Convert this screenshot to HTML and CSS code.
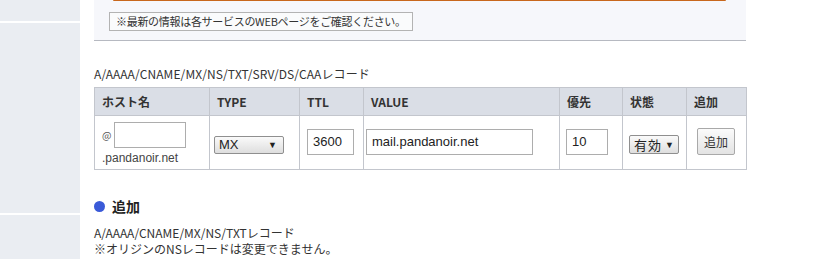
FILE: index.html
```html
<!DOCTYPE html>
<html lang="ja">
<head>
    <meta charset="UTF-8">
    <meta name="viewport" content="width=device-width, initial-scale=1.0">
    <title>DNS設定</title>
    <link rel="stylesheet" href="styles.css">
</head>
<body>
    <div class="page">
        <div class="sidebar">
            <div class="side-item short"></div>
            <div class="side-item tall"></div>
            <div class="side-item"></div>
        </div>

        <div class="main">
            <div class="info-panel">
                <div class="orange-bar"></div>
                <div class="notice">※最新の情報は各サービスのWEBページをご確認ください。</div>
            </div>

            <p class="caption">A/AAAA/CNAME/MX/NS/TXT/SRV/DS/CAAレコード</p>

            <table class="records">
                <colgroup>
                    <col style="width: 115px">
                    <col style="width: 90px">
                    <col style="width: 64px">
                    <col style="width: 196px">
                    <col style="width: 63px">
                    <col style="width: 64px">
                    <col style="width: 60px">
                </colgroup>
                <thead>
                    <tr>
                        <th>ホスト名</th>
                        <th>TYPE</th>
                        <th>TTL</th>
                        <th>VALUE</th>
                        <th>優先</th>
                        <th>状態</th>
                        <th>追加</th>
                    </tr>
                </thead>
                <tbody>
                    <tr>
                        <td class="host-cell">
                            <div class="host-line">
                                <span class="at">@</span>
                                <input type="text" class="field host-input" value="">
                            </div>
                            <div class="domain">.pandanoir.net</div>
                        </td>
                        <td class="type-cell">
                            <div class="select type-select">
                                <span class="select-text">MX</span>
                                <span class="arrow">▼</span>
                            </div>
                        </td>
                        <td>
                            <input type="text" class="field ttl-input" value="3600">
                        </td>
                        <td class="value-cell">
                            <input type="text" class="field value-input" value="mail.pandanoir.net">
                        </td>
                        <td class="prio-cell">
                            <input type="text" class="field prio-input" value="10">
                        </td>
                        <td class="state-cell">
                            <div class="select state-select">
                                <span class="select-text jp">有効</span>
                                <span class="arrow">▼</span>
                            </div>
                        </td>
                        <td class="add-cell">
                            <button class="add-btn">追加</button>
                        </td>
                    </tr>
                </tbody>
            </table>

            <h2 class="section-title"><span class="dot"></span>追加</h2>
            <p class="text">A/AAAA/CNAME/MX/NS/TXTレコード</p>
            <p class="text">※オリジンのNSレコードは変更できません。</p>
            <p class="text">※オリジンのNSレコード機能で設定されるA/AAAAレコードは変更できません。</p>
        </div>
    </div>
</body>
</html>
```

FILE: styles.css
```css
body {
    margin: 0;
    font-family: 'Noto Sans CJK JP', 'Noto Sans', sans-serif;
    color: #333;
    background-color: #fff;
    height: 259px;
    overflow: hidden;
}

.page {
    display: flex;
    align-items: flex-start;
}

/* left navigation */
.sidebar {
    width: 80px;
    flex-shrink: 0;
    display: flex;
    flex-direction: column;
    gap: 2px;
}

.side-item {
    background-color: #eaedf2;
    height: 60px;
}

.side-item.short {
    height: 21px;
}

.side-item.tall {
    height: 190px;
}

.main {
    width: 652px;
    margin-left: 14px;
}

/* top info panel */
.info-panel {
    background-color: #f6f7fb;
    border-bottom: 1px solid #b6b9c1;
    padding: 0 20px 9px 15px;
}

.orange-bar {
    height: 1px;
    margin-left: 4px;
    background-color: #c8671c;
    border-radius: 0 0 2px 2px;
}

.notice {
    display: inline-block;
    margin-top: 11px;
    border: 1px solid #b3b3b3;
    background-color: #fafbfc;
    padding: 0 6px;
    height: 17px;
    line-height: 17px;
    font-size: 11px;
    letter-spacing: -0.3px;
    color: #333;
}

.caption {
    margin: 24px 0 5px;
    font-size: 12px;
    line-height: 17px;
    letter-spacing: 0.1px;
    color: #333;
}

/* record table */
.records {
    width: 652px;
    table-layout: fixed;
    border-collapse: collapse;
}

.records th,
.records td {
    border: 1px solid #c3c6cd;
    text-align: left;
    padding: 0 7px;
}

.records th {
    background-color: #dadee6;
    height: 27px;
    font-size: 12px;
    font-weight: 700;
    color: #333;
}

.records td {
    height: 53px;
    vertical-align: middle;
    font-size: 12px;
}

.field {
    box-sizing: border-box;
    height: 26px;
    border: 1px solid #adadad;
    background-color: #fff;
    font-family: 'Liberation Sans', Arial, sans-serif;
    font-size: 13px;
    color: #222;
    padding: 0 5px;
    margin: 0;
    display: block;
}

.records td.host-cell {
    vertical-align: top;
}

.host-line {
    display: flex;
    align-items: center;
    gap: 3px;
    margin-top: 6px;
}

.at {
    font-size: 10px;
    color: #555;
    margin-top: -2px;
}

.host-input {
    width: 72px;
}

.domain {
    font-family: 'Liberation Sans', Arial, sans-serif;
    font-size: 12px;
    line-height: 14px;
    color: #444;
    margin-top: 3px;
}

.records td.type-cell {
    padding-left: 4px;
}

.select {
    box-sizing: border-box;
    display: flex;
    align-items: center;
    justify-content: space-between;
    border: 1px solid #8f8f8f;
    border-radius: 2px;
    background: linear-gradient(#fafafa, #dedede);
    font-family: 'Liberation Sans', Arial, sans-serif;
    color: #222;
}

.type-select {
    width: 70px;
    height: 18px;
    margin-top: 4px;
    padding: 0 6px 0 4px;
    font-size: 13px;
}

.arrow {
    font-size: 9px;
    color: #222;
}

.ttl-input {
    width: 47px;
    margin-top: -2px;
}

.records td.value-cell {
    padding-left: 2px;
}

.value-input {
    width: 167px;
    margin-top: -2px;
}

.records td.prio-cell {
    padding-left: 6px;
}

.prio-input {
    width: 42px;
    margin-top: -2px;
}

.records td.state-cell {
    padding-left: 6px;
}

.state-select {
    width: 50px;
    height: 19px;
    margin-top: 4px;
    padding: 0 4px;
}

.select-text.jp {
    font-family: 'Noto Sans CJK JP', sans-serif;
    font-size: 13px;
    letter-spacing: 1px;
}

.records td.add-cell {
    padding-left: 10px;
}

.add-btn {
    display: block;
    box-sizing: border-box;
    width: 38px;
    height: 27px;
    margin-top: -3px;
    padding: 0;
    border: 1px solid #a9a9a9;
    border-radius: 2px;
    background: linear-gradient(#fbfbfb, #e3e3e3);
    font-family: 'Noto Sans CJK JP', sans-serif;
    font-size: 12px;
    color: #333;
}

/* section below table */
.section-title {
    display: flex;
    align-items: center;
    gap: 7px;
    margin: 26px 0 9px;
    font-size: 14px;
    font-weight: 700;
    line-height: 20px;
    color: #222;
}

.dot {
    width: 11px;
    height: 11px;
    border-radius: 50%;
    background-color: #3a5ad8;
}

.text {
    margin: 0;
    font-size: 12px;
    line-height: 16px;
    color: #333;
}
```
